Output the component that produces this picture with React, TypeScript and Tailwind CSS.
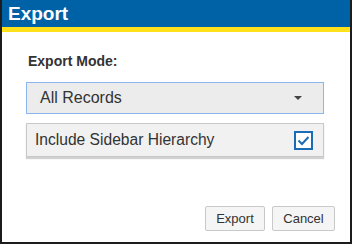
import React, { useState } from 'react';

const App: React.FC = () => {
  const [includeSidebar, setIncludeSidebar] = useState(true);

  return (
    <div
      className="w-[352px] h-[244px] bg-white flex flex-col border-l-2 border-r-2 border-b-2 border-[#1c1c1c] overflow-hidden"
      style={{ fontFamily: '"Liberation Sans", Arial, sans-serif' }}
    >
      <div className="h-[27px] bg-[#0062a6] flex items-center px-[6px]">
        <span className="text-white font-bold text-[19px] leading-none">Export</span>
      </div>
      <div className="h-[5px] bg-[#ffe11b]" />

      <div className="flex-1 flex flex-col pl-[24px] pr-[26px] pt-[22px]">
        <label className="text-[14px] font-bold text-[#333] leading-none pl-[2px]">Export Mode:</label>

        <div className="mt-[14px] h-[32px] bg-[#ececec] border border-[#8ab6ee] flex items-center justify-between pl-[13px] pr-[21px]">
          <span className="text-[16px] text-[#333]">All Records</span>
          <svg width="8" height="4" viewBox="0 0 8 4">
            <path d="M0 0h8L4 4z" fill="#444" />
          </svg>
        </div>

        <div className="mt-[9px] h-[34px] bg-[#f1f1f1] border border-[#c8c8c8] shadow-[0_2px_1px_rgba(0,0,0,0.18)] flex items-center justify-between pl-[8px] pr-[10px]">
          <span className="text-[15.6px] text-[#333]">Include Sidebar Hierarchy</span>
          <button
            type="button"
            onClick={() => setIncludeSidebar(!includeSidebar)}
            className="w-[19px] h-[19px] border-2 border-[#1b6cb6] bg-white flex items-center justify-center"
          >
            {includeSidebar && (
              <svg width="13" height="11" viewBox="0 0 13 11">
                <path d="M1.5 5.5l3.5 3.5L11.5 2" stroke="#1b6cb6" strokeWidth="2" fill="none" />
              </svg>
            )}
          </button>
        </div>

        <div className="mt-auto mb-[11px] flex justify-end gap-[7px] mr-[-11px]">
          <button
            type="button"
            className="w-[60px] h-[25px] bg-[#f5f5f5] border border-[#c9c9c9] rounded-[2px] text-[13px] text-[#333]"
          >
            Export
          </button>
          <button
            type="button"
            className="w-[63px] h-[25px] bg-[#f5f5f5] border border-[#c9c9c9] rounded-[2px] text-[13px] text-[#333]"
          >
            Cancel
          </button>
        </div>
      </div>
    </div>
  );
};

export default App;
